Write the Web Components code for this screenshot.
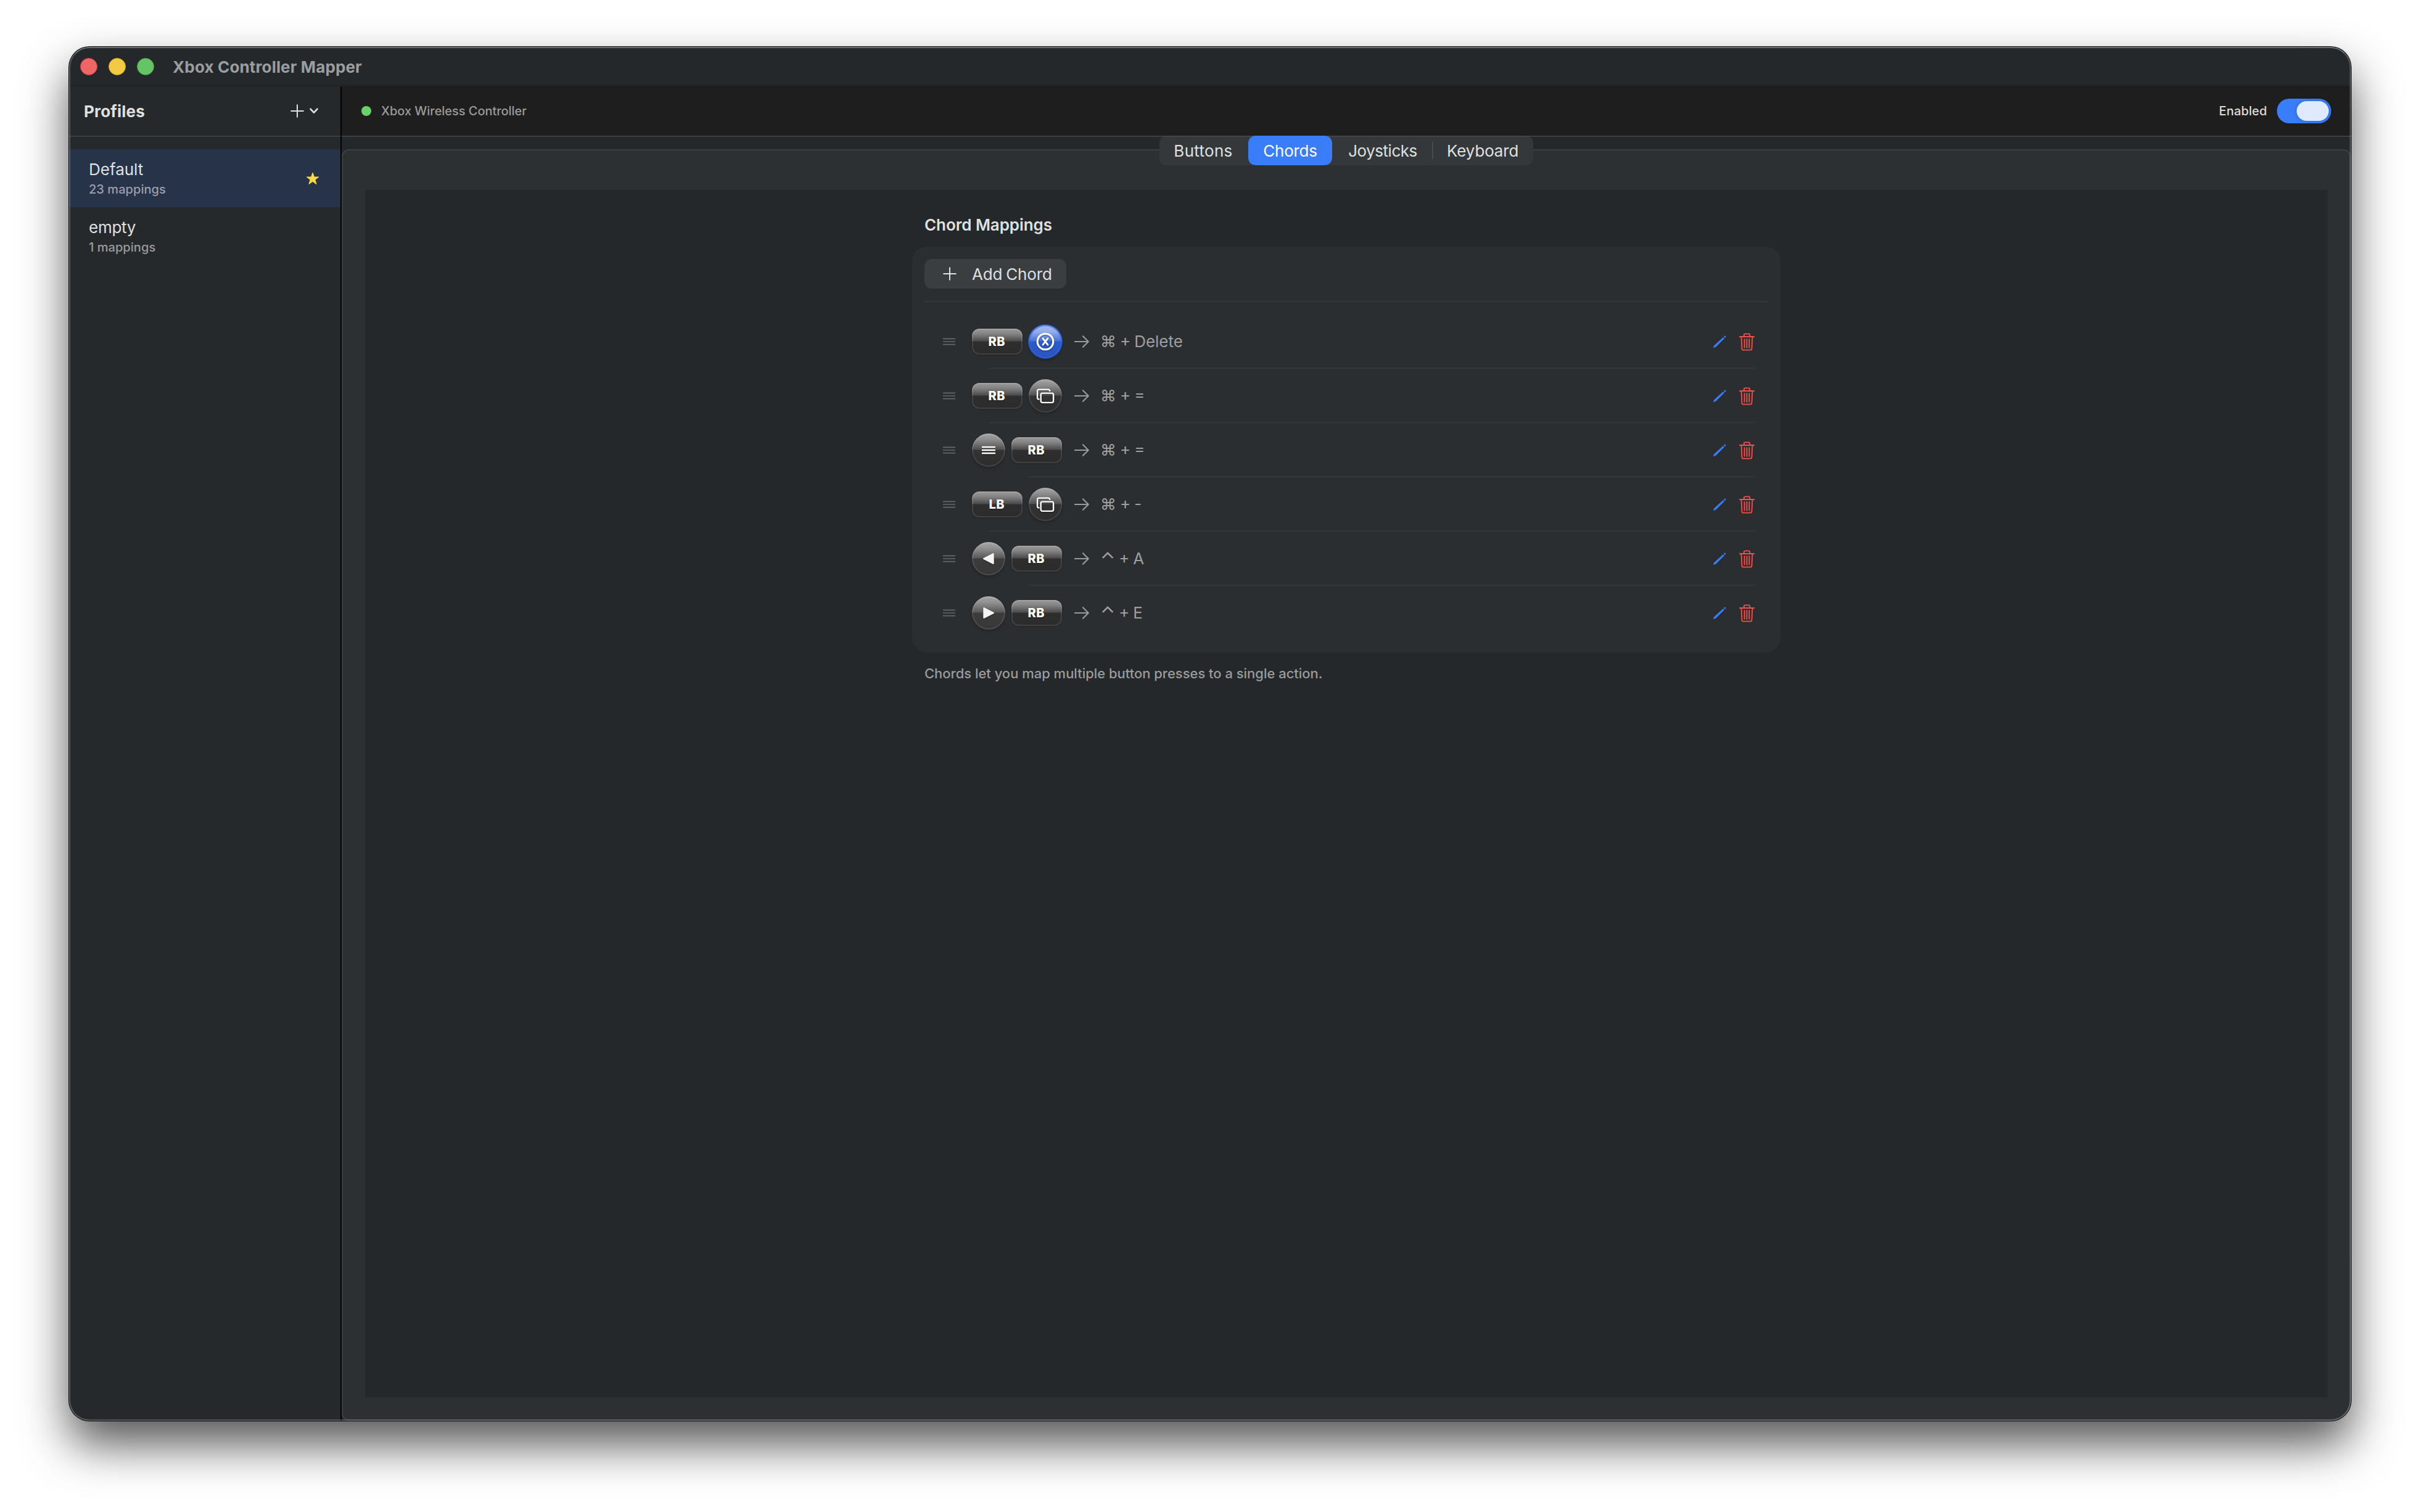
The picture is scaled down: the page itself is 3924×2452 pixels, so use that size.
<!DOCTYPE html>
<html lang="en">
<head>
<meta charset="utf-8">
<title>Xbox Controller Mapper</title>
<style>
  * {
    box-sizing: border-box;
  }

  body {
    margin: 0;
    width: 3924px;
    height: 2452px;
    padding: 76px 112px 148px;
    background: #fff;
    overflow: hidden;
    font-family: Inter, "Liberation Sans", sans-serif;
    font-size: 26px;
    color: #dfe0e0;
  }
</style>
</head>
<body>
<app-window heading="Xbox Controller Mapper">
  <profile-sidebar slot="sidebar">
    <profile-item name="Default" count="23" selected></profile-item>
    <profile-item name="empty" count="1"></profile-item>
  </profile-sidebar>

  <status-bar device="Xbox Wireless Controller"></status-bar>

  <tab-view>
    <tab-button slot="tab" style="width:142px;--track:.3px">Buttons</tab-button>
    <tab-button slot="tab" style="width:140px;--track:-.25px" active>Chords</tab-button>
    <tab-button slot="tab" style="width:160px;--track:-.47px">Joysticks</tab-button>
    <tab-button slot="tab" style="width:164px;--track:-.15px" divided>Keyboard</tab-button>

    <chord-section heading="Chord Mappings" note="Chords let you map multiple button presses to a single action.">
      <chord-row keys="rb x" action="⌘ + Delete"></chord-row>
      <chord-row keys="rb view" action="⌘ + ="></chord-row>
      <chord-row keys="menu rb" action="⌘ + ="></chord-row>
      <chord-row keys="lb view" action="⌘ + -"></chord-row>
      <chord-row keys="left rb" action="⌃ + A"></chord-row>
      <chord-row keys="right rb" action="⌃ + E" last></chord-row>
    </chord-section>
  </tab-view>
</app-window>

<script>
const ICONS = {
  plus: `<svg width="22" height="22" viewBox="0 0 22 22" fill="none" stroke="currentColor" stroke-width="2" stroke-linecap="round"><path d="M11 1.2v19.6M1.2 11h19.6"/></svg>`,
  chevron: `<svg width="14" height="10" viewBox="0 0 14 10" fill="none" stroke="currentColor" stroke-width="2.7" stroke-linecap="round" stroke-linejoin="round"><path d="M1.6 1.8 7 7.6l5.4-5.8"/></svg>`,
  star: `<svg width="22" height="22" viewBox="0 0 22 22" fill="#fbd845" stroke="#fbd845" stroke-width="1" stroke-linejoin="round"><path d="M11 1l2.45 7h7.35l-5.9 4.45 2.2 7.2L11 15.3l-6.1 4.35 2.2-7.2L1.2 8h7.35z"/></svg>`,
  handle: `<svg width="20" height="12" viewBox="0 0 20 12" stroke="#65686a" stroke-width="1.6"><path d="M0 1.4h20M0 6h20M0 10.6h20"/></svg>`,
  arrow: `<svg width="24" height="20" viewBox="0 0 24 20" fill="none" stroke="#999b9c" stroke-width="2.1" stroke-linecap="round" stroke-linejoin="round"><path d="M1 10h21.800M14 1.2l8.8 8.8-8.8 8.8"/></svg>`,
  pencil: `<svg width="22" height="22" viewBox="0 0 22 22" fill="#397df9"><path d="M16 3.9l2.1 2.1L4.200 19.700.5 21a.4.4 0 0 1-.5-.5L1.500 17.200z"/><path d="M17 3.100l1.300-1.300q.9-.8 1.8.1t.1 1.8l-1.300 1.300z"/></svg>`,
  trash: `<svg width="25" height="29" viewBox="0 0 25 29" fill="none" stroke="#f0524a" stroke-width="1.800" stroke-linecap="round" stroke-linejoin="round"><path d="M.9 6h23.200M3.500 6l1 19.500q.1 2.200 2 2.200h12q1.900 0 2-2.200l1-19.500M7.800 6V3.200q0-1.900 1.900-1.900h5.600q1.900 0 1.900 1.900V6M8.600 10v13.800M12.500 10v13.800M16.400 10v13.800"/></svg>`,
  x: `<svg width="30" height="30" viewBox="0 0 30 30" fill="none" stroke="#fff" stroke-linecap="round"><circle cx="15" cy="15" r="12.8" stroke-width="3.100"/><path d="M11 9.800l8 10.400M19 9.800l-8 10.400" stroke-width="2.9"/></svg>`,
  view: `<svg width="30" height="26" viewBox="0 0 30 26" fill="none" stroke="#fff" stroke-width="2.4" stroke-linejoin="round"><path d="M5.500 18.400h-.9q-2.500 0-2.500-2.500V5.100q0-2.500 2.500-2.500h15q2.500 0 2.500 2.500v.7"/><rect x="7.700" y="8.600" width="20.400" height="15.300" rx="2.600"/></svg>`,
  menu: `<svg width="24" height="16" viewBox="0 0 24 16" stroke="#fff" stroke-width="2.5" stroke-linecap="round"><path d="M2 3h20M2 8h20M2 13h20"/></svg>`,
  left: `<svg width="24" height="24" viewBox="0 0 24 24" fill="#f4f4f4" stroke="#f4f4f4" stroke-width="2.400" stroke-linejoin="round"><path d="M19.500 4.200v15.600L4.200 12z"/></svg>`,
  right: `<svg width="24" height="24" viewBox="0 0 24 24" fill="#f4f4f4" stroke="#f4f4f4" stroke-width="2.400" stroke-linejoin="round"><path d="M4.500 4.200v15.600L19.800 12z"/></svg>`,
};

const BASE = `
  *, ::before, ::after { box-sizing: border-box; }
  svg { display: block; flex: none; }
`;

class AppWindow extends HTMLElement {
  constructor() {
    super();
    this.attachShadow({ mode: "open" });
  }

  connectedCallback() {
    this.shadowRoot.innerHTML = `
      <style>
        ${BASE}
        :host {
          position: relative;
          display: flex;
          flex-direction: column;
          width: 3700px;
          height: 2228px;
          border-radius: 33px;
          background: #24282a;
          box-shadow: 0 0 0 1px #060808, 0 38px 76px rgba(0, 0, 0, .67);
        }
        /* bright rim drawn over every pane */
        :host::after {
          content: "";
          position: absolute;
          inset: 0;
          border: 2px solid rgba(255, 255, 255, .24);
          border-top-color: rgba(255, 255, 255, .34);
          border-radius: 33px;
          pointer-events: none;
        }
        header {
          display: flex;
          align-items: center;
          gap: 18px;
          height: 64px;
          padding-left: 18px;
          box-shadow: inset 0 -2px #222324;
          font-weight: 700;
          letter-spacing: .15px;
          color: #9b9ea0;
          flex: none;
        }
        i {
          width: 28px;
          height: 28px;
          border-radius: 50%;
          border: 1px solid;
        }
        .close { background: #ee6766; border-color: #d9403f; }
        .min { background: #f4c944; border-color: #d9a61c; }
        .zoom { background: #64c466; border-color: #37a73c; }
        span { margin-left: 12px; }
        .body {
          display: flex;
          flex: 1;
          min-height: 0;
          overflow: hidden;
          border-radius: 0 0 33px 33px;
        }
        main {
          display: flex;
          flex-direction: column;
          flex: 1;
          border-left: 2px solid #000;
        }
      </style>
      <header>
        <i class="close"></i><i class="min"></i><i class="zoom"></i>
        <span>${this.getAttribute("heading")}</span>
      </header>
      <div class="body">
        <slot name="sidebar"></slot>
        <main><slot></slot></main>
      </div>
    `;
  }
}

class ProfileSidebar extends HTMLElement {
  constructor() {
    super();
    this.attachShadow({ mode: "open" });
  }

  connectedCallback() {
    this.shadowRoot.innerHTML = `
      <style>
        ${BASE}
        :host {
          display: block;
          width: 440px;
          flex: none;
          background: #25292b;
        }
        header {
          display: flex;
          align-items: center;
          height: 82px;
          padding: 0 36px 0 24px;
          border-bottom: 2px solid #3b3f42;
          font-weight: 700;
          letter-spacing: .19px;
        }
        .add {
          display: flex;
          align-items: center;
          gap: 9px;
          margin-left: auto;
        }
        .list { padding-top: 20px; }
      </style>
      <header>
        Profiles
        <div class="add">${ICONS.plus}${ICONS.chevron}</div>
      </header>
      <div class="list"><slot></slot></div>
    `;
  }
}

class ProfileItem extends HTMLElement {
  constructor() {
    super();
    this.attachShadow({ mode: "open" });
  }

  connectedCallback() {
    const selected = this.hasAttribute("selected");

    this.shadowRoot.innerHTML = `
      <style>
        ${BASE}
        :host {
          display: flex;
          align-items: center;
          justify-content: space-between;
          height: 94px;
          padding: 1px 34px 0 32px;
        }
        :host([selected]) { background: #263349; }
        .name { line-height: 32px; letter-spacing: ${selected ? 0 : -0.25}px; }
        .count {
          margin-top: 3px;
          font-size: 20px;
          font-weight: 500;
          line-height: 26px;
          letter-spacing: .05px;
          color: #999b9c;
        }
        :host([selected]) .count { color: #999fa9; }
      </style>
      <div>
        <div class="name">${this.getAttribute("name")}</div>
        <div class="count">${this.getAttribute("count")} mappings</div>
      </div>
      ${selected ? ICONS.star : ""}
    `;
  }
}

class StatusBar extends HTMLElement {
  constructor() {
    super();
    this.attachShadow({ mode: "open" });
  }

  connectedCallback() {
    this.shadowRoot.innerHTML = `
      <style>
        ${BASE}
        :host {
          display: flex;
          align-items: center;
          height: 82px;
          flex: none;
          padding: 0 32px;
          background: #1e1e1e;
          border-bottom: 2px solid #3b3f42;
          font-size: 20px;
          font-weight: 500;
        }
        .dot {
          width: 16px;
          height: 16px;
          margin-right: 16px;
          border-radius: 50%;
          background: #69d16a;
        }
        .device { flex: 1; color: #9a9a9a; letter-spacing: -.04px; }
        .label { letter-spacing: .15px; color: #dddddd; }
        .toggle {
          display: flex;
          justify-content: flex-end;
          width: 88px;
          height: 40px;
          margin-left: 16px;
          padding: 4px;
          border-radius: 20px;
          background: #397df9;
        }
        .toggle div {
          width: 52px;
          border-radius: 16px;
          background: #e0eafd;
          box-shadow: 0 0 10px rgba(0, 0, 0, .14);
        }
      </style>
      <div class="dot"></div>
      <div class="device">${this.getAttribute("device")}</div>
      <div class="label">Enabled</div>
      <div class="toggle"><div></div></div>
    `;
  }
}

class TabView extends HTMLElement {
  constructor() {
    super();
    this.attachShadow({ mode: "open" });
  }

  connectedCallback() {
    this.shadowRoot.innerHTML = `
      <style>
        ${BASE}
        :host {
          position: relative;
          display: flex;
          flex: 1;
          padding-top: 20px;
        }
        .box {
          display: flex;
          flex: 1;
          padding: 64px 36px 36px;
          border: 2px solid #3b3f42;
          border-radius: 12px 12px 33px 12px;
          background: #2c3033;
        }
        .pane { flex: 1; background: #24282a; }
        /* segmented control straddles the top edge of the box */
        .tabs {
          position: absolute;
          top: -2px;
          left: 50%;
          transform: translateX(-50%);
          display: flex;
          height: 48px;
          border-radius: 12px;
          overflow: hidden;
          background: linear-gradient(#43474a 2px, #34383b 2px);
        }
      </style>
      <div class="box">
        <div class="pane"><slot></slot></div>
      </div>
      <div class="tabs"><slot name="tab"></slot></div>
    `;
  }
}

class TabButton extends HTMLElement {
  constructor() {
    super();
    this.attachShadow({ mode: "open" });
  }

  connectedCallback() {
    this.shadowRoot.innerHTML = `
      <style>
        ${BASE}
        :host {
          display: flex;
          align-items: center;
          justify-content: center;
          height: 48px;
          letter-spacing: var(--track, 0);
        }
        /* the selected segment keeps a 2px hairline of space on each side */
        :host([active]) {
          border: 0 solid transparent;
          border-width: 0 2px;
          border-radius: 14px / 12px;
          background: #397df9 padding-box;
          color: #fff;
        }
        :host([divided])::before {
          content: "";
          width: 2px;
          height: 28px;
          margin-right: 22px;
          background: #484c4f;
        }
        :host([divided]) { justify-content: flex-start; }
      </style>
      <slot></slot>
    `;
  }
}

class ChordSection extends HTMLElement {
  constructor() {
    super();
    this.attachShadow({ mode: "open" });
  }

  connectedCallback() {
    this.shadowRoot.innerHTML = `
      <style>
        ${BASE}
        :host {
          display: block;
          width: 1408px;
          margin: 0 auto;
          padding-top: 37px;
        }
        h2 {
          margin: 0 0 15px 20px;
          font-size: 26px;
          font-weight: 600;
          line-height: 40px;
          letter-spacing: -.08px;
        }
        .card {
          height: 658px;
          padding: 20px;
          border-radius: 24px;
          background: #2b2e31;
        }
        button {
          display: flex;
          align-items: center;
          gap: 25px;
          width: 230px;
          height: 48px;
          padding: 0 0 0 30px;
          border: 0;
          border-radius: 12px;
          background: #3a3e41;
          font: inherit;
          letter-spacing: -.12px;
          word-spacing: -1.4px;
          color: inherit;
        }
        hr {
          height: 2px;
          margin: 20px 0;
          border: 0;
          background: #34383b;
        }
        p {
          margin: 20px 0 0 20px;
          font-size: 22px;
          font-weight: 500;
          line-height: 28px;
          letter-spacing: -.02px;
          color: #999b9c;
        }
      </style>
      <h2>${this.getAttribute("heading")}</h2>
      <div class="card">
        <button>${ICONS.plus}Add Chord</button>
        <hr>
        <slot></slot>
      </div>
      <p>${this.getAttribute("note")}</p>
    `;
  }
}

class ChordRow extends HTMLElement {
  constructor() {
    super();
    this.attachShadow({ mode: "open" });
  }

  connectedCallback() {
    const keys = this.getAttribute("keys").split(" ");
    // the separator lines up with the first bumper's text
    const inset = keys[0].endsWith("b") ? 104 : 168;
    // the control glyph is small in the font, so it gets its own size
    const action = this.getAttribute("action").replace("⌃", "<b>⌃</b>");

    this.shadowRoot.innerHTML = `
      <style>
        ${BASE}
        :host { display: block; height: 88px; }
        .row {
          display: flex;
          align-items: center;
          height: 88px;
          padding: 0 22px 0 30px;
        }
        .keys { display: flex; align-items: center; gap: 10px; margin: 0 20px 0 27px; }
        .action {
          flex: 1;
          margin-left: 18px;
          line-height: 32px;
          word-spacing: -1.35px;
          color: #9d9fa0;
        }
        b {
          font-size: 31px;
          font-weight: 400;
          line-height: 0;
          vertical-align: -3px;
        }
        .tools { display: flex; align-items: center; gap: 20px; }
        hr {
          height: 2px;
          margin: -2px 20px 0 ${inset}px;
          border: 0;
          background: #34373a;
        }
        :host([last]) hr { display: none; }
      </style>
      <div class="row">
        ${ICONS.handle}
        <div class="keys">${keys.map((k) => `<pad-button kind="${k}"></pad-button>`).join("")}</div>
        ${ICONS.arrow}
        <div class="action">${action}</div>
        <div class="tools">${ICONS.pencil}${ICONS.trash}</div>
      </div>
      <hr>
    `;
  }
}

class PadButton extends HTMLElement {
  constructor() {
    super();
    this.attachShadow({ mode: "open" });
  }

  connectedCallback() {
    const kind = this.getAttribute("kind");

    this.shadowRoot.innerHTML = `
      <style>
        ${BASE}
        :host {
          --rim: rgba(255, 255, 255, .1);
          display: flex;
          align-items: center;
          justify-content: center;
          width: 54px;
          height: 54px;
          border-radius: 50%;
          background: linear-gradient(#a6a6a6, #8a8a8a 20%, #505050 48%, #333 50%, #2d2d2d);
          box-shadow: inset 0 0 0 2px var(--rim), 0 3px 4px rgba(0, 0, 0, .2);
        }
        :host([kind="rb"]), :host([kind="lb"]) {
          width: 82px;
          height: 42px;
          border-radius: 12px;
          background: linear-gradient(#9c9c9c, #838383 20%, #4a4a4a 48%, #2f2f2f 50%, #2b2b2b);
          box-shadow: inset 0 0 0 2px var(--rim), 0 1px 3px rgba(0, 0, 0, .2);
        }
        :host([kind="left"]), :host([kind="right"]) {
          background: linear-gradient(#a8a8a8, #8e8e8e 20%, #585858 48%, #3c3c3c 50%, #373737);
        }
        :host([kind="x"]) {
          background: linear-gradient(#a5bbf0, #94aeea 20%, #4a72d6 48%, #2b5bcd 50%, #2a55ba);
          box-shadow: inset 0 0 0 2px rgba(45, 100, 235, .6), 0 0 0 1px #2453bd, 0 3px 4px rgba(0, 0, 0, .25);
        }
        span {
          font-size: 20px;
          font-weight: 800;
          line-height: 24px;
          letter-spacing: .5px;
          margin-right: 1.5px;
          color: #fff;
          text-shadow: 0 1px 2px rgba(0, 0, 0, .5);
        }
        svg { filter: drop-shadow(0 1px 1px rgba(0, 0, 0, .4)); }
      </style>
      ${ICONS[kind] || `<span>${kind.toUpperCase()}</span>`}
    `;
  }
}

customElements.define("app-window", AppWindow);
customElements.define("profile-sidebar", ProfileSidebar);
customElements.define("profile-item", ProfileItem);
customElements.define("status-bar", StatusBar);
customElements.define("tab-view", TabView);
customElements.define("tab-button", TabButton);
customElements.define("chord-section", ChordSection);
customElements.define("chord-row", ChordRow);
customElements.define("pad-button", PadButton);
</script>
</body>
</html>
